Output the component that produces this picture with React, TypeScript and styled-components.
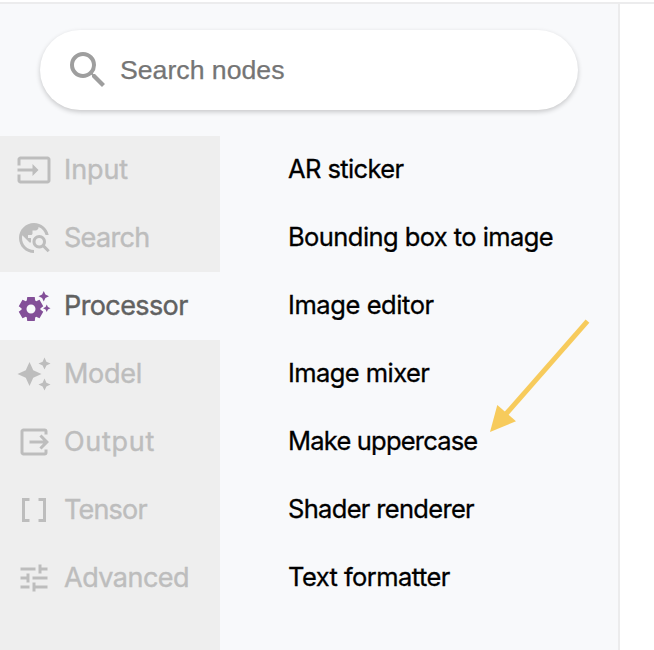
import React from "react";
import styled, { createGlobalStyle } from "styled-components";
import type { IconType } from "react-icons";
import {
  MdAutoAwesome,
  MdDataArray,
  MdOutput,
  MdSearch,
  MdSettingsSuggest,
  MdTravelExplore,
  MdTune,
} from "react-icons/md";

const GlobalStyle = createGlobalStyle`
  * { box-sizing: border-box; }
  body { margin: 0; background: #fff; overflow: hidden; }
`;

const Page = styled.div`
  width: 654px;
  height: 650px;
  padding-top: 2px;
  display: flex;
  flex-direction: column;
  background: #fff;
  font-family: Inter, "Liberation Sans", sans-serif;
`;

const TopRule = styled.div`
  height: 2px;
  flex: none;
  background: #ececed;
`;

const Panel = styled.aside`
  position: relative;
  flex: 1;
  width: 620px;
  min-height: 0;
  display: flex;
  flex-direction: column;
  background: #f8f9fb;
  border-right: 2px solid #ececed;
`;

const SearchBar = styled.label`
  flex: none;
  display: flex;
  align-items: center;
  gap: 8px;
  width: 538px;
  height: 80px;
  margin: 26px 0 26px 40px;
  padding-left: 24px;
  border-radius: 40px;
  background: #fff;
  color: #9e9e9e;
  box-shadow: 0 2px 5px rgba(0, 0, 0, 0.2);
`;

const SearchInput = styled.input`
  flex: 1;
  min-width: 0;
  padding: 0;
  border: 0;
  outline: 0;
  background: transparent;
  font: 26.67px "Liberation Sans", Arial, sans-serif;
  &::placeholder {
    color: #757575;
    opacity: 1;
    -webkit-text-stroke: 0.25px #757575;
  }
`;

const Columns = styled.div`
  flex: 1;
  min-height: 0;
  display: flex;
`;

const Categories = styled.nav`
  width: 220px;
  background: #eeeeee;
`;

const Category = styled.div<{ $active?: boolean }>`
  display: flex;
  align-items: center;
  gap: 12px;
  height: 68px;
  padding-left: 16px;
  background: ${(p) => (p.$active ? "#f8f9fb" : "transparent")};
  color: ${(p) => (p.$active ? "#616161" : "#bdbdbd")};
  svg { flex: none; color: ${(p) => (p.$active ? "#834f98" : "#bdbdbd")}; }
`;

const CategoryLabel = styled.span<{ $spacing: number }>`
  font-size: 27px;
  line-height: 36px;
  white-space: nowrap;
  letter-spacing: ${(p) => p.$spacing}px;
  -webkit-text-stroke: 0.4px currentColor;
`;

const NodeList = styled.div`
  flex: 1;
  padding-left: 68px;
`;

const NodeItem = styled.div<{ $spacing: number }>`
  height: 68px;
  line-height: 66px;
  font-size: 25.5px;
  color: #000;
  white-space: nowrap;
  letter-spacing: ${(p) => p.$spacing}px;
  -webkit-text-stroke: 0.3px currentColor;
`;

const Pointer = styled.svg`
  position: absolute;
  left: 484px;
  top: 310px;
`;

const InputIcon: IconType = ({ size }) => (
  <svg width={size} height={size} viewBox="0 0 24 24" fill="currentColor">
    <path d="M21 3.01H3c-1.1 0-2 .9-2 2V9h2V4.99h18v14.03H3V15H1v4.01c0 1.1.9 1.98 2 1.98h18c1.1 0 2-.88 2-1.98v-14c0-1.11-.9-2-2-2zM11 16l4-4-4-4v3H1v2h10v3z" />
  </svg>
);

const categories: { label: string; icon: IconType; spacing: number; active?: boolean }[] = [
  { label: "Input", icon: InputIcon, spacing: -0.1 },
  { label: "Search", icon: MdTravelExplore, spacing: -0.7 },
  { label: "Processor", icon: MdSettingsSuggest, spacing: -0.6, active: true },
  { label: "Model", icon: MdAutoAwesome, spacing: -0.3 },
  { label: "Output", icon: MdOutput, spacing: 0.7 },
  { label: "Tensor", icon: MdDataArray, spacing: -0.8 },
  { label: "Advanced", icon: MdTune, spacing: -0.5 },
];

const nodes = [
  { label: "AR sticker", spacing: -0.6 },
  { label: "Bounding box to image", spacing: -0.57 },
  { label: "Image editor", spacing: -0.42 },
  { label: "Image mixer", spacing: -0.57 },
  { label: "Make uppercase", spacing: -0.8 },
  { label: "Shader renderer", spacing: -0.68 },
  { label: "Text formatter", spacing: -0.56 },
];

export default function App() {
  return (
    <Page>
      <GlobalStyle />
      <TopRule />
      <Panel>
        <SearchBar>
          <MdSearch size={48} />
          <SearchInput placeholder="Search nodes" />
        </SearchBar>
        <Columns>
          <Categories>
            {categories.map(({ label, icon: Icon, spacing, active }) => (
              <Category key={label} $active={active}>
                <Icon size={36} />
                <CategoryLabel $spacing={spacing}>{label}</CategoryLabel>
              </Category>
            ))}
          </Categories>
          <NodeList>
            {nodes.map((n) => (
              <NodeItem key={n.label} $spacing={n.spacing}>{n.label}</NodeItem>
            ))}
          </NodeList>
        </Columns>
        <Pointer width="110" height="124" viewBox="484 314 110 124" aria-hidden="true">
          <path d="M587.5 321.2 506 414" stroke="#f7cb5c" strokeWidth="5" />
          <path d="M490 432 497.3 405 516 421.3Z" fill="#f7cb5c" />
        </Pointer>
      </Panel>
    </Page>
  );
}
